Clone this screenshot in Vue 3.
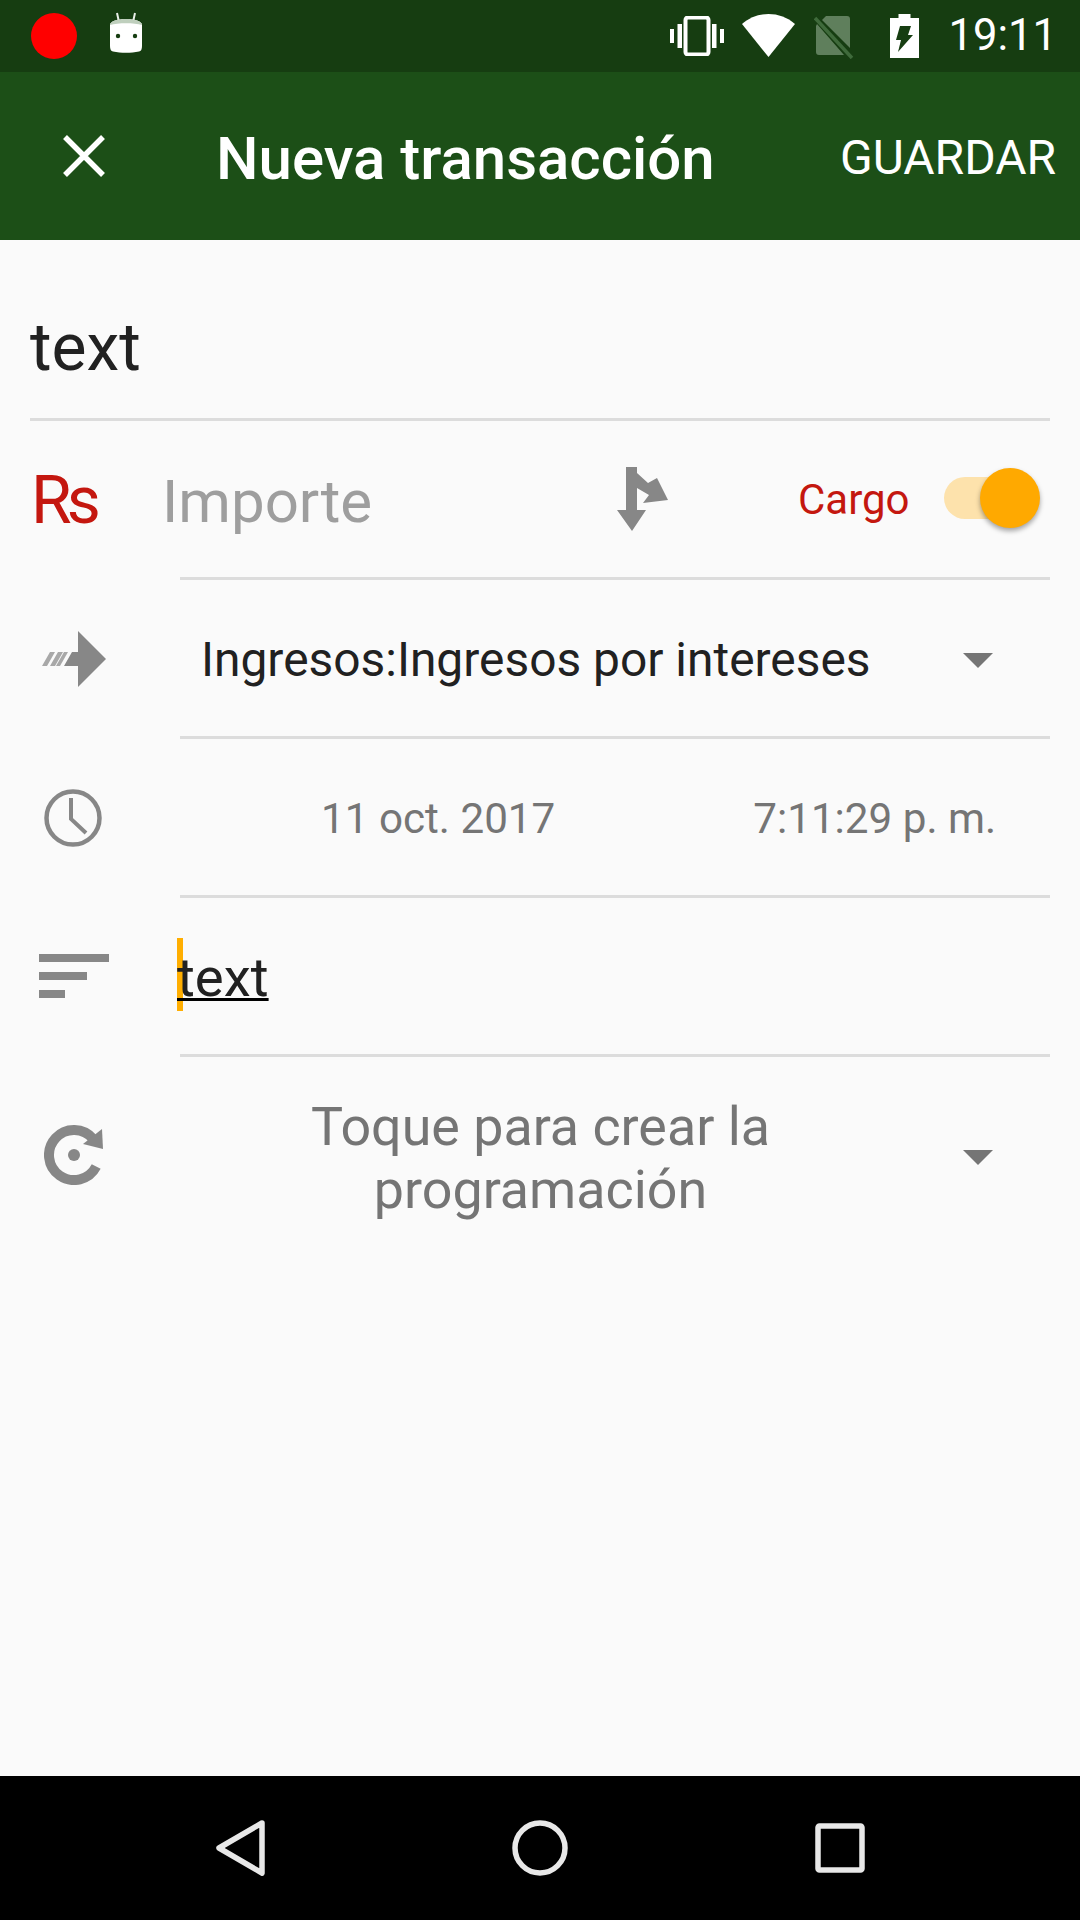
<script setup>
const lines = ['Toque para crear la', 'programación']
</script>

<template>
  <div class="screen">
    <div class="status">
      <span class="rec"></span>
      <svg class="android" width="34" height="41" viewBox="0 0 34 41">
        <path d="M8 1l2 9M26 1l-2 9" stroke="#e8efe8" stroke-width="2" fill="none"/>
        <path d="M1 13C1 9 9 7 17 7s16 2 16 6v20c0 5-1 6-3 6.500-8 1.700-18 1.700-26 0C2 39 1 38 1 33z" fill="#fff"/>
        <path d="M1 13C1 9 9 7 17 7s16 2 16 6c-8-2.500-24-2.500-32 0z" fill="#bfcfbd"/>
        <circle cx="9" cy="24" r="2.200" fill="#163d11"/>
        <circle cx="26" cy="24" r="2.200" fill="#163d11"/>
      </svg>
      <span class="grow"></span>
      <svg class="i-vib" width="54" height="40" viewBox="0 0 54 40" fill="#fff">
        <rect x="15.500" y="1.500" width="23" height="37" rx="2.500" fill="none" stroke="#fff" stroke-width="4"/>
        <rect x="0" y="13" width="4" height="14"/>
        <rect x="7.500" y="8" width="4.500" height="24"/>
        <rect x="42" y="8" width="4.500" height="24"/>
        <rect x="50" y="13" width="4" height="14"/>
      </svg>
      <svg class="i-wifi" width="53" height="43" viewBox="0 0 53 43" fill="#fff">
        <path d="M0 10C15-3.300 38-3.300 53 10L26.500 43z"/>
      </svg>
      <svg class="i-sim" width="40" height="44" viewBox="0 0 40 44">
        <path d="M12 1h21a3 3 0 0 1 3 3v29L8 5z M3 9l27 31H5a3 3 0 0 1-3-3V11z" fill="#5f7f5c"/>
        <path d="M1 3l37 40" stroke="#3f6a3b" stroke-width="3.500"/>
      </svg>
      <svg class="i-bat" width="29" height="44" viewBox="0 0 29 44">
        <path d="M8.500 0h12v4h8.500v40H0V4h8.500z" fill="#fff"/>
        <path d="M10 12h11l-3 9h5L8 38l3-12H6z" fill="#163d11"/>
      </svg>
      <span class="clock-text">19:11</span>
    </div>

    <header class="toolbar">
      <svg class="close" width="42" height="42" viewBox="0 0 42 42">
        <path d="M2 2l38 38M40 2L2 40" stroke="#fff" stroke-width="5.500"/>
      </svg>
      <h1 class="title">Nueva transacción</h1>
      <span class="save">GUARDAR</span>
    </header>

    <main class="form">
      <div class="desc-row">
        <span class="desc">text</span>
      </div>

      <div class="row amount-row">
        <span class="currency">Rs</span>
        <span class="placeholder">Importe</span>
        <svg class="split" width="52" height="64" viewBox="0 0 52 64" fill="#878787">
          <path d="M9 0h11v6l11 10 9-5 11 22-25 3 6-8-12-7v22h9L15 64 0 43h9z"/>
        </svg>
        <span class="cargo">Cargo</span>
        <span class="switch"><span class="knob"></span></span>
      </div>

      <div class="row account-row">
        <svg class="ico arrow" width="64" height="56" viewBox="0 0 64 56" fill="#878787">
          <path d="M36 0l28 28-28 28V35H22l8-14h6z"/>
          <path d="M0 35l8-14h5l-8 14zM8 35l8-14h5l-8 14z" fill="#a8a8a8"/>
          <path d="M14 35l8-14h4l-8 14z" fill="#a8a8a8"/>
        </svg>
        <span class="account">Ingresos:Ingresos por intereses</span>
        <span class="caret"></span>
      </div>

      <div class="row date-row">
        <svg class="ico" width="60" height="60" viewBox="0 0 60 60" fill="none" stroke="#878787">
          <circle cx="30" cy="30" r="26.500" stroke-width="4.500"/>
          <path d="M28 10v21l15 14" stroke-width="4"/>
        </svg>
        <span class="date">11 oct. 2017</span>
        <span class="time">7:11:29 p. m.</span>
      </div>

      <div class="row note-row">
        <svg class="ico" width="70" height="46" viewBox="0 0 70 46" fill="#878787">
          <rect x="0" y="0" width="70" height="8"/>
          <rect x="0" y="18" width="48" height="8"/>
          <rect x="0" y="36" width="26" height="8"/>
        </svg>
        <span class="note"><span class="cursor"></span><span class="note-text">text</span></span>
      </div>

      <div class="recur-row">
        <svg class="ico recur" width="60" height="60" viewBox="0 0 60 60" fill="#878787">
          <path d="M52.200 41.500A25 25 0 1 1 49.200 14" fill="none" stroke="#878787" stroke-width="10"/>
          <path d="M58 4l1 20-20-5z"/>
          <circle cx="30" cy="30" r="6"/>
        </svg>
        <div class="recur-text">
          <div v-for="l in lines" :key="l">{{ l }}</div>
        </div>
        <span class="caret"></span>
      </div>
    </main>

    <nav class="navbar">
      <svg width="50" height="56" viewBox="0 0 50 56" class="back">
        <path d="M46 3L3 28l43 25z" fill="none" stroke="#e8e8e8" stroke-width="5.500" stroke-linejoin="round"/>
      </svg>
      <svg width="56" height="56" viewBox="0 0 56 56" class="home">
        <circle cx="28" cy="28" r="25" fill="none" stroke="#e8e8e8" stroke-width="5.500"/>
      </svg>
      <svg width="50" height="50" viewBox="0 0 50 50" class="recent">
        <rect x="3" y="3" width="44" height="44" rx="1.500" fill="none" stroke="#e8e8e8" stroke-width="5.500"/>
      </svg>
    </nav>
  </div>
</template>

<style>
html, body { margin: 0; background: #fafafa; }
</style>

<style scoped>
.screen {
  width: 1080px;
  height: 1920px;
  display: flex;
  flex-direction: column;
  background: #fafafa;
  font-family: Roboto, "Liberation Sans", sans-serif;
  overflow: hidden;
}
.status {
  height: 72px;
  flex: none;
  display: flex;
  align-items: center;
  background: #163d11;
  padding-left: 31px;
  box-sizing: border-box;
}
.rec { width: 46px; height: 46px; border-radius: 50%; background: #f00; }
.android { margin-left: 32px; margin-top: -7px; }
.grow { flex: 1; }
.i-wifi { margin-left: 18px; margin-top: -1px; }
.i-sim { margin-left: 19px; margin-top: 2px; }
.i-bat { margin-left: 36px; }
.clock-text {
  margin-left: 29.500px;
  width: 131.500px;
  color: #fff;
  font-size: 43.600px;
  line-height: 72px;
}
.toolbar {
  height: 168px;
  flex: none;
  display: flex;
  align-items: center;
  background: #1c4f17;
  color: #fff;
  padding-left: 63px;
  box-sizing: border-box;
}
.title {
  margin: 4px 0 0 111px;
  font-size: 60px;
  font-weight: 500;
  white-space: nowrap;
  width: 624px;
}
.close { margin-top: -1px; }
.save { font-size: 48px; white-space: nowrap; margin-top: 2px; }
.form { flex: 1; min-height: 0; }
.desc-row {
  height: 181px;
  margin: 0 30px;
  box-sizing: border-box;
  border-bottom: 3px solid #dcdcdc;
  display: flex;
  align-items: center;
}
.desc { font-size: 66px; color: #212121; margin-top: 36px; }
.row {
  height: 159px;
  margin-right: 30px;
  box-sizing: border-box;
  display: flex;
  align-items: center;
  position: relative;
}
.row::after {
  content: "";
  position: absolute;
  left: 180px;
  right: 0;
  bottom: 0;
  height: 3px;
  background: #dcdcdc;
}
.currency {
  margin-left: 31px;
  width: 131px;
  color: #c4170f;
  font-size: 66px;
  letter-spacing: -5px;
  margin-top: -1px;
}
.placeholder {
  color: #9e9e9e;
  font-size: 60px;
  width: 455px;
  margin-top: 1px;
}
.split { margin-top: -4px; }
.cargo {
  margin-left: 129px;
  font-size: 42px;
  color: #c4170f;
  margin-top: -3px;
}
.switch {
  margin-left: 34px;
  width: 57px;
  height: 42px;
  border-radius: 21px 0 0 21px;
  background: #fde2ac;
  position: relative;
  margin-top: -5px;
}
.knob {
  position: absolute;
  left: 36px;
  top: -9px;
  width: 60px;
  height: 60px;
  border-radius: 50%;
  background: #ffa900;
  box-shadow: 0 3px 5px rgba(0, 0, 0, .35);
}
.ico { flex: none; }
.arrow { margin-left: 42px; margin-top: -2px; }
.account {
  margin-left: 95px;
  font-size: 47.900px;
  color: #212121;
  width: 760px;
  white-space: nowrap;
}
.caret {
  width: 0;
  height: 0;
  border-left: 15px solid transparent;
  border-right: 15px solid transparent;
  border-top: 15px solid #757575;
  position: absolute;
  left: 963px;
}
.account-row .caret { top: 73px; }
.date-row .ico { margin-left: 43px; margin-top: -2px; }
.date, .time { color: #757575; font-size: 42.200px; white-space: nowrap; }
.date { margin-left: 218px; }
.time { margin-left: 198px; }
.note-row .ico { margin-left: 39px; margin-top: -2px; }
.note {
  position: relative;
  margin-left: 68px;
  margin-top: -2px;
  font-size: 54.500px;
  color: #212121;
}
.note-text {
  position: relative;
  text-decoration: underline;
  text-decoration-thickness: 3px;
  text-decoration-color: #000;
}
.cursor {
  position: absolute;
  left: 0;
  top: -7px;
  width: 6px;
  height: 73px;
  background: #ffae00;
}
.recur-row {
  position: relative;
  height: 150px;
  display: flex;
  align-items: flex-start;
}
.recur { margin-left: 43.500px; margin-top: 68px; }
.recur-text {
  position: absolute;
  left: 1px;
  right: 0;
  top: 38px;
  text-align: center;
  font-size: 53.800px;
  line-height: 63px;
  color: #757575;
}
.recur-row .caret { top: 93px; }
.navbar { height: 144px; flex: none; background: #000; position: relative; display: flex; align-items: flex-start; }
.back { margin-left: 216px; margin-top: 44px; }
.home { margin-left: 246px; margin-top: 44px; }
.recent { margin-left: 247px; margin-top: 47px; }
</style>
